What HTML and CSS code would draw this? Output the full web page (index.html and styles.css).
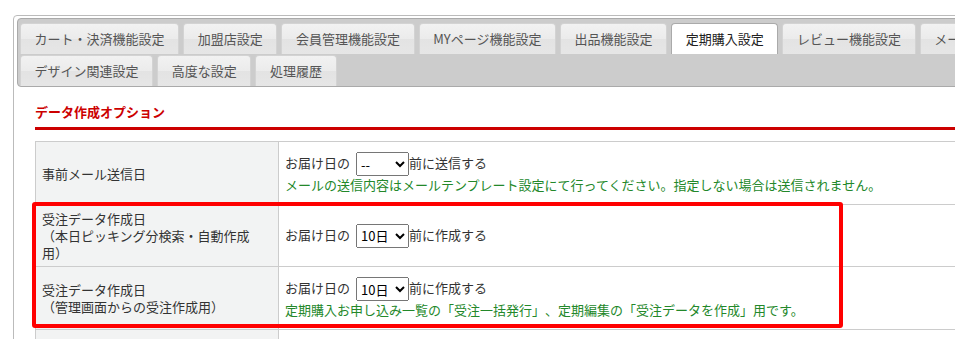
FILE: index.html
```html
<!DOCTYPE html>
<html lang="ja">
<head>
    <meta charset="UTF-8">
    <meta name="viewport" content="width=device-width, initial-scale=1.0">
    <title>定期購入設定</title>
    <link rel="stylesheet" href="styles.css">
</head>
<body>
    <div class="panel">
        <!-- Tab Navigation -->
        <ul class="tabs">
            <li>カート・決済機能設定</li>
            <li>加盟店設定</li>
            <li>会員管理機能設定</li>
            <li>MYページ機能設定</li>
            <li>出品機能設定</li>
            <li class="active">定期購入設定</li>
            <li>レビュー機能設定</li>
            <li>メール設定</li>
            <li class="row-break"></li>
            <li>デザイン関連設定</li>
            <li>高度な設定</li>
            <li>処理履歴</li>
        </ul>

        <!-- Tab Content -->
        <div class="panel-body">
            <h2 class="section-title">データ作成オプション</h2>

            <div class="table-wrap">
                <table class="opt-table">
                    <tr>
                        <th>事前メール送信日</th>
                        <td>
                            お届け日の<select><option>--</option></select>前に送信する
                            <p class="note">メールの送信内容はメールテンプレート設定にて行ってください。指定しない場合は送信されません。</p>
                        </td>
                    </tr>
                    <tr>
                        <th>受注データ作成日<br>（本日ピッキング分検索・自動作成用）</th>
                        <td>お届け日の<select><option>10日</option></select>前に作成する</td>
                    </tr>
                    <tr>
                        <th>受注データ作成日<br>（管理画面からの受注作成用）</th>
                        <td>
                            お届け日の<select><option>10日</option></select>前に作成する
                            <p class="note">定期購入お申し込み一覧の「受注一括発行」、定期編集の「受注データを作成」用です。</p>
                        </td>
                    </tr>
                    <tr>
                        <th>&nbsp;</th>
                        <td>&nbsp;</td>
                    </tr>
                </table>
                <!-- Highlight frame over rows 2-3 -->
                <div class="highlight"></div>
            </div>
        </div>
    </div>
</body>
</html>
```

FILE: styles.css
```css
/* General Reset */
* {
    margin: 0;
    padding: 0;
    box-sizing: border-box;
}

body {
    font-family: "Noto Sans CJK JP", "Noto Sans", sans-serif;
    font-size: 13px;
    color: #333;
    background-color: #fff;
    overflow: hidden;
    text-spacing-trim: space-all;
}

/* Outer Panel */
.panel {
    width: 1200px;
    margin: 15px 0 0 13px;
    padding: 2px 3px;
    border: 1px solid #bbb;
    border-radius: 4px;
    min-height: 400px;
}

/* Tabs */
.tabs {
    display: flex;
    flex-wrap: wrap;
    list-style: none;
    padding: 3px 2px 0 2px;
    background-color: #ccc;
    border: 1px solid #aaa;
    border-radius: 4px;
}

.tabs li {
    margin: 1px 4px 0 0;
    padding: 7px 13.6px;
    line-height: 16px;
    color: #555;
    white-space: nowrap;
    background: linear-gradient(#f2f2f2 0%, #ebebeb 50%, #e3e3e3 51%, #e6e6e6 100%);
    border: 1px solid #d3d3d3;
    border-bottom: 0;
    border-radius: 4px 4px 0 0;
    cursor: pointer;
}

.tabs li.active {
    background: #fff;
    border-color: #aaa;
    color: #212121;
}

.tabs li.row-break {
    flex-basis: 100%;
    height: 0;
    margin: 0;
    padding: 0;
    border: none;
    background: none;
}

/* Content */
.panel-body {
    padding: 13px 0 0 18px;
}

.section-title {
    font-size: 13px;
    line-height: 18px;
    font-weight: bold;
    color: #c00;
    padding: 3px 0 6px;
    border-bottom: 3px solid #c00;
    margin-bottom: 11px;
}

.table-wrap {
    position: relative;
}

.opt-table {
    width: 1160px;
    border-collapse: collapse;
    border: 1px solid #ccc;
}

.opt-table th {
    width: 243px;
    padding: 5px 6px;
    text-align: left;
    font-weight: normal;
    line-height: 17px;
    background-color: #f2f3f3;
    border: 1px solid #ccc;
    vertical-align: middle;
}

.opt-table td {
    padding: 10px 6px;
    line-height: 18px;
    border: 1px solid #ccc;
    vertical-align: middle;
}

.opt-table select {
    width: 53px;
    height: 24px;
    margin-left: 6px;
    font-family: inherit;
    font-size: 13px;
    color: #000;
    vertical-align: middle;
}

.note {
    color: #23882a;
    line-height: 18px;
}

/* Red highlight frame */
.highlight {
    position: absolute;
    left: -3px;
    top: 61px;
    width: 811px;
    height: 126px;
    border: 4px solid #f00;
    border-radius: 3px;
    pointer-events: none;
}
```
